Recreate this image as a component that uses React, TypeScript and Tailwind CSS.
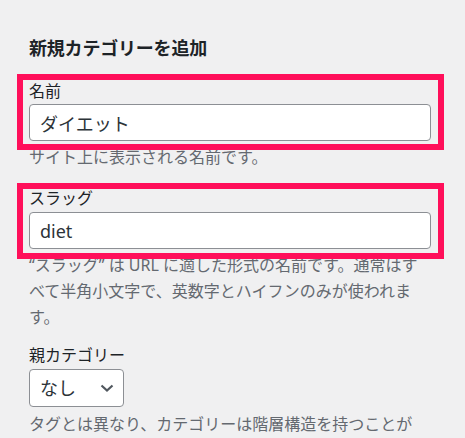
export default function App() {
  return (
    <div
      className="min-h-screen w-full overflow-hidden bg-[#f0f0f1] pt-[35px] pl-[29px] text-[#1d2327]"
      style={{ fontFamily: '"Noto Sans", "Noto Sans CJK JP", sans-serif' }}
    >
      <div className="w-[402px]">
        {/* heading */}
        <h2 className="text-[18px] font-bold leading-[26px] tracking-[-0.2px]">新規カテゴリーを追加</h2>

        {/* name */}
        <div className="relative mt-[18px]">
          <label className="block text-[16px] leading-[24px]">名前</label>
          <input
            className="mt-px block h-[37px] w-full rounded-[4px] border border-[#8c8f94] bg-white pl-[10px] text-[18px] text-[#2c3338] outline-none"
            defaultValue="ダイエット"
          />
          <div className="absolute -top-[5px] -bottom-[9px] -left-[12px] -right-[13px] z-10 border-[6px] border-[#ff0f5a]" />
        </div>
        <p className="mt-[3px] text-[16px] leading-[26px] text-[#646970]">サイト上に表示される名前です。</p>

        {/* slug */}
        <div className="relative mt-[16px]">
          <label className="block text-[16px] leading-[24px]">スラッグ</label>
          <input
            className="mt-[2px] block h-[37px] w-full rounded-[4px] border border-[#8c8f94] bg-white pl-[10px] text-[18px] text-[#2c3338] outline-none"
            defaultValue="diet"
          />
          <div className="absolute -top-[3px] -bottom-[10px] -left-[12px] -right-[13px] z-10 border-[6px] border-[#ff0f5a]" />
        </div>
        <p className="mt-[3px] pr-[10px] text-[16px] leading-[26px] text-[#646970]">
          “スラッグ” は URL に適した形式の名前です。通常はすべて半角小文字で、英数字とハイフンのみが使われます。
        </p>

        {/* parent */}
        <div className="mt-[13px]">
          <label className="block text-[16px] leading-[24px]">親カテゴリー</label>
          <div className="mt-[2px] flex h-[38px] w-[95px] items-center justify-between rounded-[4px] border border-[#8c8f94] bg-white pl-[10px] pr-[9px]">
            <span className="text-[18px] text-[#2c3338]">なし</span>
            <svg width="14" height="8" viewBox="0 0 14 8" fill="none">
              <path d="M1.5 1.5L7 6.5L12.5 1.5" stroke="#50575e" strokeWidth="2.2" />
            </svg>
          </div>
        </div>
        <p className="mt-[4px] whitespace-nowrap text-[16px] leading-[26px] text-[#646970]">
          タグとは異なり、カテゴリーは階層構造を持つことが
        </p>
      </div>
    </div>
  );
}
